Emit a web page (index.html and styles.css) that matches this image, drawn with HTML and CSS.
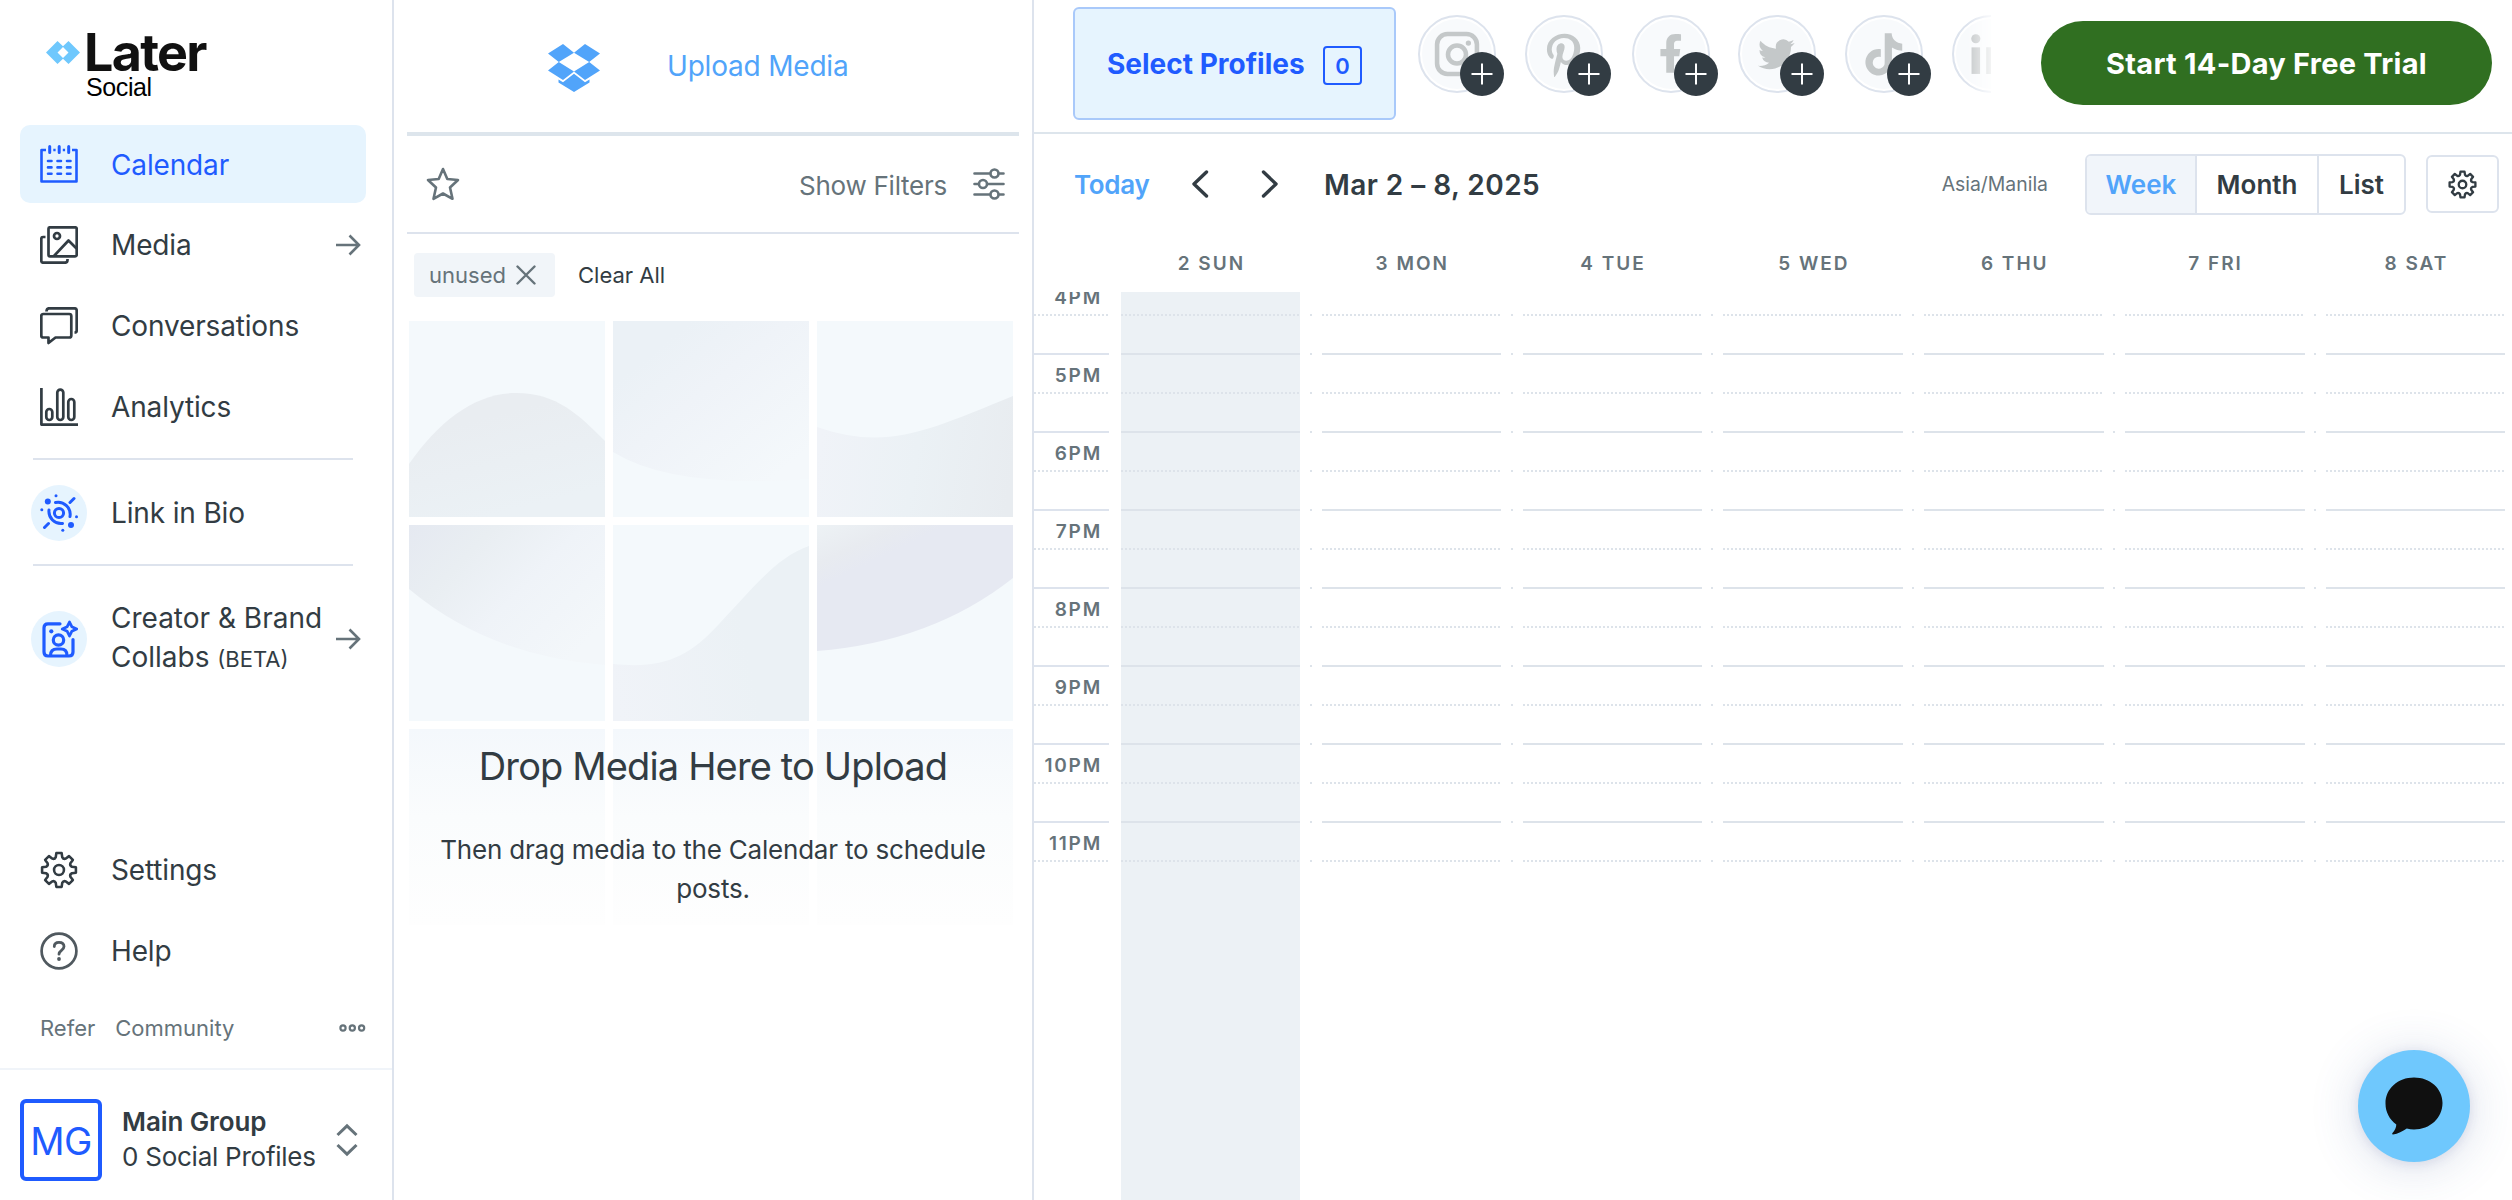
FILE: index.html
```html
<!DOCTYPE html>
<html lang="en">
<head>
    <meta charset="UTF-8">
    <meta name="viewport" content="width=device-width, initial-scale=1.0">
    <title>Later Social - Calendar</title>
    <link rel="stylesheet" href="styles.css">
</head>
<body>
    <!-- shared icons -->
    <svg class="defs" width="0" height="0">
        <symbol id="gear" viewBox="0 0 40 40">
            <path d="M17.2 2.2H22.8L23.4 6.4Q24.6 8.9 27.2 8L30.6 5.4L34.6 9.4L32 12.8Q31.1 15.4 33.6 16.6L37.8 17.2V22.8L33.6 23.4Q31.1 24.6 32 27.2L34.6 30.6L30.6 34.6L27.2 32Q24.6 31.1 23.4 33.6L22.8 37.8H17.2L16.6 33.6Q15.4 31.1 12.8 32L9.4 34.6L5.4 30.6L8 27.2Q8.9 24.6 6.4 23.4L2.2 22.8V17.2L6.4 16.6Q8.9 15.4 8 12.8L5.4 9.4L9.4 5.4L12.8 8Q15.4 8.9 16.6 6.4Z"/>
            <circle cx="20" cy="20" r="5.2"/>
        </symbol>
        <symbol id="arrow" viewBox="0 0 26 22">
            <path d="M1 11H24M14.5 1.5L24 11L14.5 20.5"/>
        </symbol>
        <symbol id="plus" viewBox="0 0 44 44">
            <path d="M22 11.5V32.5M11.5 22H32.5"/>
        </symbol>
    </svg>

    <nav class="sidebar">
        <div class="logo">
            <svg width="34" height="23" viewBox="0 0 34 23">
                <path fill="#6fc8fd" fill-rule="evenodd" d="M0 11.5L11.5 0L17 5.3L22.5 0L34 11.5L22.5 23L17 17.7L11.5 23ZM17 6L11.5 11.5L17 17L22.5 11.5Z"/>
            </svg>
            <div class="logo-text">
                <span class="logo-name">Later</span>
                <span class="logo-sub">Social</span>
            </div>
        </div>

        <div class="nav-item active">
            <svg class="icon" viewBox="0 0 38 38">
                <path stroke-width="2.6" d="M6 5H1.5V36.5H36.5V5H32"/>
                <path stroke-width="3" stroke-linecap="round" d="M9.7 1.5V7.5M19.2 1.5V7.5M28.7 1.5V7.5"/>
                <path stroke-width="2.6" d="M13.3 5H15.6M22.8 5H25.1"/>
                <path stroke-width="2.6" stroke-linecap="round" d="M8 16H11.5M17.5 16H21M27 16H30.5M8 22.4H11.5M17.5 22.4H21M27 22.4H30.5M8 28.8H11.5M17.5 28.8H21M27 28.8H30.5"/>
            </svg>
            <span>Calendar</span>
        </div>
        <div class="nav-item">
            <svg class="icon" viewBox="0 0 38 38">
                <rect x="8.5" y="1.3" width="28.2" height="29" rx="1.5"/>
                <circle cx="17" cy="10" r="3"/>
                <path d="M14 30L28.5 14.5L36.5 22.5M5.5 11H3Q1.3 11 1.3 12.7V34.7Q1.3 36.7 3.3 36.7H25Q27.5 36.7 27.5 34V33"/>
            </svg>
            <span>Media</span>
            <svg class="arrow"><use href="#arrow"/></svg>
        </div>
        <div class="nav-item">
            <svg class="icon" viewBox="0 0 38 38">
                <path d="M3.3 7H29.3Q31.3 7 31.3 9V28.5Q31.3 30.5 29.3 30.5H15.5L8.5 36V30.5H3.3Q1.3 30.5 1.3 28.5V9Q1.3 7 3.3 7Z"/>
                <path d="M6.5 4.5Q6.5 1.3 9 1.3H34.5Q36.7 1.3 36.7 3.5V23.5Q36.7 25.5 34.5 25.5"/>
            </svg>
            <span>Conversations</span>
        </div>
        <div class="nav-item">
            <svg class="icon" viewBox="0 0 38 38">
                <path d="M1.4 0V36.6H38"/>
                <rect x="6.3" y="21" width="6" height="11" rx="3"/>
                <rect x="17.3" y="1.6" width="6" height="30.4" rx="3"/>
                <rect x="28.3" y="11" width="6" height="21" rx="3"/>
            </svg>
            <span>Analytics</span>
        </div>

        <hr>

        <div class="nav-item bio">
            <span class="round">
                <svg width="38" height="38" viewBox="0 0 38 38" fill="none" stroke="#1f5bff" stroke-width="3">
                    <circle cx="19" cy="19" r="4.6"/>
                    <path stroke-linecap="round" d="M15.5 8.5A12.2 12.2 0 0 1 30 22.5M34 4.5L30 8.5M22.5 29.5A12.2 12.2 0 0 1 9 16M4.5 33.5L8.5 29.5"/>
                    <g fill="#1f5bff" stroke="none">
                        <circle cx="7.8" cy="7.5" r="3"/><circle cx="31" cy="31" r="3"/>
                        <circle cx="16" cy="1.8" r="1.5"/><circle cx="1.8" cy="15.8" r="1.5"/>
                        <circle cx="36.5" cy="22.8" r="1.5"/><circle cx="22.8" cy="36.3" r="1.5"/>
                    </g>
                </svg>
            </span>
            <span>Link in Bio</span>
        </div>

        <hr>

        <div class="nav-item collabs">
            <span class="round">
                <svg width="38" height="38" viewBox="0 0 38 38" fill="none" stroke="#1f5bff" stroke-width="3.2" stroke-linejoin="round" stroke-linecap="round">
                    <path d="M20 3.8H8Q4 3.8 4 7.8V32Q4 36 8 36H29Q33 36 33 32V19.5"/>
                    <circle cx="18.5" cy="20" r="5.2"/>
                    <path d="M10.5 35.5Q10.5 29 17 29H21Q27 29 27 35.5"/>
                    <path stroke-width="2.8" d="M29.5 2L31.8 6.7L36.7 9L31.8 11.3L29.5 16L27.2 11.3L22.3 9L27.2 6.7Z"/>
                    <circle cx="11.3" cy="11.3" r="2.1" fill="#1f5bff" stroke="none"/>
                </svg>
            </span>
            <span>Creator &amp; Brand<br>Collabs <small>(BETA)</small></span>
            <svg class="arrow"><use href="#arrow"/></svg>
        </div>

        <div class="nav-bottom">
            <div class="nav-item">
                <svg class="icon"><use href="#gear"/></svg>
                <span>Settings</span>
            </div>
            <div class="nav-item">
                <svg class="icon help" viewBox="0 0 38 38">
                    <circle cx="19" cy="19" r="17.4"/>
                    <path stroke-width="2.8" stroke-linecap="round" d="M14.3 14.5C14.3 11.7 16.2 10.4 19 10.4C22 10.4 24 12 24 14.6C24 18.4 19 18.4 19 22.2"/>
                    <circle cx="19" cy="27" r="1.9" fill="#50595f" stroke="none"/>
                </svg>
                <span>Help</span>
            </div>
            <div class="extra-links">
                <a>Refer</a>
                <a>Community</a>
                <svg width="27" height="8" viewBox="0 0 27 8" fill="none" stroke="#66737a" stroke-width="2.2">
                    <circle cx="4" cy="4" r="2.6"/><circle cx="13.3" cy="4" r="2.6"/><circle cx="22.6" cy="4" r="2.6"/>
                </svg>
            </div>
            <div class="group">
                <div class="avatar">MG</div>
                <div class="group-info">
                    <strong>Main Group</strong>
                    <span>0 Social Profiles</span>
                </div>
                <svg width="22" height="34" viewBox="0 0 22 34" fill="none" stroke="#66737a" stroke-width="3">
                    <path d="M1.5 12L11 2.8L20.5 12M1.5 22L11 31.2L20.5 22"/>
                </svg>
            </div>
        </div>
    </nav>

    <section class="media">
        <div class="upload">
            <svg width="52" height="48" viewBox="0 0 52 48" fill="#51a4fa">
                <path d="M15 0L26 8.8L10.8 18L0 9.6ZM37 0L52 9.6L41.2 18L26 8.8ZM10.8 18L26 27.6L15 36L0 26.4ZM41.2 18L52 26.4L37 36L26 27.6ZM26 29.8L37 38.2L41.5 35.5V38.6L26 48L10.5 38.6V35.5L15 38.2Z"/>
            </svg>
            <a>Upload Media</a>
        </div>
        <div class="filters">
            <svg width="34" height="34" viewBox="0 0 34 34" fill="none" stroke="#66737a" stroke-width="2.6" stroke-linejoin="round">
                <path d="M17 2L21.3 12L32 13L24 20.5L26.5 31.8L17 26.5L7.5 31.8L10 20.5L2 13L12.7 12Z"/>
            </svg>
            <span>Show Filters</span>
            <svg width="32" height="32" viewBox="0 0 32 32" fill="none" stroke="#66737a" stroke-width="2.6" stroke-linecap="round">
                <path d="M1.5 5.5H17M26 5.5H30.5M1.5 16H5.5M14.5 16H30.5M1.5 26.5H17M26 26.5H30.5"/>
                <circle cx="21.5" cy="5.5" r="4"/><circle cx="10" cy="16" r="4"/><circle cx="21.5" cy="26.5" r="4"/>
            </svg>
        </div>
        <div class="tags">
            <span class="tag">unused
                <svg width="20" height="20" viewBox="0 0 20 20" fill="none" stroke="#66737a" stroke-width="2.4" stroke-linecap="round"><path d="M1.5 1.5L18.5 18.5M18.5 1.5L1.5 18.5"/></svg>
            </span>
            <a>Clear All</a>
        </div>
        <div class="drop-zone">
            <svg class="tile" viewBox="0 0 196 196">
                <linearGradient id="g1" x1="0" y1="0" x2=".4" y2="1"><stop offset=".3" stop-color="#e9edf1"/><stop offset="1" stop-color="#ebf1f5"/></linearGradient>
                <path fill="url(#g1)" d="M0 143C30 100 66 72 107 72S170 94 196 120V196H0Z"/>
            </svg>
            <svg class="tile" viewBox="0 0 196 196">
                <linearGradient id="g2" x1="0" y1="0" x2="1" y2="1"><stop offset=".2" stop-color="#ebf1f6"/><stop offset=".45" stop-color="#eff3f8"/><stop offset=".9" stop-color="#f4f8fb"/></linearGradient>
                <path fill="url(#g2)" d="M0 0H196V158Q60 168 0 131Z"/>
            </svg>
            <svg class="tile" viewBox="0 0 196 196">
                <linearGradient id="g3" x1="0" y1=".5" x2="1" y2=".6"><stop offset="0" stop-color="#f0f3f8"/><stop offset=".5" stop-color="#ebf1f5"/><stop offset="1" stop-color="#e8ecf0"/></linearGradient>
                <path fill="url(#g3)" d="M0 106C70 130 110 110 196 75V196H0Z"/>
            </svg>
            <svg class="tile" viewBox="0 0 196 196">
                <linearGradient id="g4" x1="0" y1="0" x2="1" y2=".7"><stop offset="0" stop-color="#e5e9f1"/><stop offset=".3" stop-color="#e9eef2"/><stop offset=".6" stop-color="#eff3f8"/><stop offset="1" stop-color="#f3f7fa"/></linearGradient>
                <path fill="url(#g4)" d="M0 0H196V140Q80 131 0 64Z"/>
            </svg>
            <svg class="tile" viewBox="0 0 196 196">
                <linearGradient id="g5" x1="0" y1=".8" x2="1" y2=".6"><stop offset="0" stop-color="#f0f3f8"/><stop offset=".7" stop-color="#ebf1f5"/></linearGradient>
                <path fill="url(#g5)" d="M0 139C50 144 75 133 107 98C145 57 165 32 196 21V196H0Z"/>
            </svg>
            <svg class="tile" viewBox="0 0 196 196">
                <linearGradient id="g6" x1="0" y1="0" x2=".6" y2=".8"><stop offset="0" stop-color="#edf2f5"/><stop offset=".25" stop-color="#e8ebf0"/><stop offset=".4" stop-color="#e6e9f2"/></linearGradient>
                <path fill="url(#g6)" d="M0 0H196V53Q115 117 0 126Z"/>
            </svg>
            <div class="tile fade"></div>
            <div class="tile fade"></div>
            <div class="tile fade"></div>
            <div class="drop-text">
                <h2>Drop Media Here to Upload</h2>
                <p>Then drag media to the Calendar to schedule posts.</p>
            </div>
        </div>
    </section>

    <main>
        <header>
            <button class="select-profiles"><span>Select Profiles</span><b>0</b></button>
            <div class="profiles">
                <div class="profile">
                    <svg class="network" viewBox="0 0 78 78" fill="none" stroke="#c4c8c9">
                        <rect x="18" y="18" width="42" height="42" rx="11" stroke-width="4.8"/>
                        <circle cx="39" cy="39.5" r="9.5" stroke-width="4.8"/>
                        <circle cx="51" cy="27.5" r="2.8" fill="#c4c8c9" stroke="none"/>
                    </svg>
                    <svg class="add"><use href="#plus"/></svg>
                </div>
                <div class="profile">
                    <svg class="network" viewBox="0 0 78 78" fill="#c4c8c9"><path transform="translate(21 17) scale(.0915)" d="M204 6.5C101.4 6.5 0 74.9 0 185.6 0 256 39.6 296 63.6 296c9.9 0 15.6-27.6 15.6-35.4 0-9.3-23.7-29.1-23.7-67.8 0-80.4 61.2-137.4 140.4-137.4 68.1 0 118.5 38.7 118.5 109.8 0 53.1-21.3 152.7-90.3 152.7-24.9 0-46.2-18-46.2-43.8 0-37.8 26.4-74.4 26.4-113.4 0-66.2-93.9-54.2-93.9 25.8 0 16.8 2.1 35.4 9.6 50.7-13.8 59.4-42 147.9-42 209.1 0 18.9 2.7 37.5 4.5 56.4 3.4 3.8 1.7 3.4 6.9 1.5 50.4-69 48.6-82.5 71.4-172.8 12.3 23.4 44.1 36 69.3 36 106.2 0 153.9-103.5 153.9-196.8C384 71.3 298.2 6.5 204 6.5z"/></svg>
                    <svg class="add"><use href="#plus"/></svg>
                </div>
                <div class="profile">
                    <svg class="network" viewBox="0 0 78 78" fill="#c4c8c9"><path transform="translate(13.5 13.7) scale(2.05)" d="M14 13.5h2.7l.5-3.7H14V7.5c0-1.3.4-2 2-2h1.6V2.2C17.2 2.1 16 2 14.7 2 11.9 2 10 3.7 10 6.7v3.1H7v3.7h3V22h4z"/></svg>
                    <svg class="add"><use href="#plus"/></svg>
                </div>
                <div class="profile">
                    <svg class="network" viewBox="0 0 78 78" fill="#c4c8c9"><path transform="translate(19 20) scale(1.61)" d="M23.953 4.57a10 10 0 01-2.825.775 4.958 4.958 0 002.163-2.723c-.951.555-2.005.959-3.127 1.184a4.92 4.92 0 00-8.384 4.482C7.69 8.095 4.067 6.13 1.64 3.162a4.822 4.822 0 00-.666 2.475c0 1.71.87 3.213 2.188 4.096a4.904 4.904 0 01-2.228-.616v.06a4.923 4.923 0 003.946 4.827 4.996 4.996 0 01-2.212.085 4.936 4.936 0 004.604 3.417 9.867 9.867 0 01-6.102 2.105c-.39 0-.779-.023-1.17-.067a13.995 13.995 0 007.557 2.209c9.053 0 13.998-7.496 13.998-13.985 0-.21 0-.42-.015-.63A9.935 9.935 0 0024 4.59z"/></svg>
                    <svg class="add"><use href="#plus"/></svg>
                </div>
                <div class="profile">
                    <svg class="network" viewBox="0 0 78 78" fill="#c4c8c9"><path transform="translate(16.5 17) scale(1.86)" d="M12.525.02c1.31-.02 2.61-.01 3.91-.02.08 1.53.63 3.09 1.75 4.17 1.12 1.11 2.7 1.62 4.24 1.79v4.03c-1.44-.05-2.89-.35-4.2-.97-.57-.26-1.1-.59-1.62-.93-.01 2.92.01 5.84-.02 8.75-.08 1.4-.54 2.79-1.35 3.94-1.31 1.92-3.58 3.17-5.91 3.21-1.43.08-2.86-.31-4.08-1.03-2.02-1.19-3.44-3.37-3.65-5.71-.02-.5-.03-1-.01-1.49.18-1.9 1.12-3.72 2.58-4.96 1.66-1.44 3.98-2.13 6.15-1.72.02 1.48-.04 2.96-.04 4.44-.99-.32-2.15-.23-3.02.37-.63.41-1.11 1.04-1.36 1.75-.21.51-.15 1.07-.14 1.61.24 1.64 1.82 3.02 3.5 2.87 1.12-.01 2.19-.66 2.77-1.61.19-.33.4-.67.41-1.06.1-1.79.06-3.57.07-5.36.01-4.03-.01-8.05.02-12.07z"/></svg>
                    <svg class="add"><use href="#plus"/></svg>
                </div>
                <div class="profile">
                    <svg class="network" viewBox="0 0 78 78" fill="#c4c8c9">
                        <circle cx="23" cy="23" r="4.8"/>
                        <rect x="18.5" y="32" width="9" height="28"/>
                        <path d="M34 32H42V36Q45 31 50 31Q60 31 60 43V60H51V45Q51 39 47 39Q43 39 43 45V60H34Z"/>
                    </svg>
                </div>
            </div>
            <button class="trial"><span>Start 14-Day Free Trial</span></button>
        </header>

        <div class="toolbar">
            <a class="today">Today</a>
            <svg class="prev" width="18" height="28" viewBox="0 0 18 28"><path d="M15.5 2L3 14L15.5 26"/></svg>
            <svg class="next" width="18" height="28" viewBox="0 0 18 28"><path d="M2.5 2L15 14L2.5 26"/></svg>
            <h1>Mar 2 – 8, 2025</h1>
            <span class="timezone">Asia/Manila</span>
            <div class="views">
                <button class="selected">Week</button>
                <button>Month</button>
                <button>List</button>
            </div>
            <button class="options"><svg><use href="#gear"/></svg></button>
        </div>

        <div class="days">
            <span>2 SUN</span>
            <span>3 MON</span>
            <span>4 TUE</span>
            <span>5 WED</span>
            <span>6 THU</span>
            <span>7 FRI</span>
            <span>8 SAT</span>
        </div>
        <div class="week">
            <div class="hours" id="hours"></div>
        </div>
    </main>

    <button class="chat">
        <svg width="60" height="60" viewBox="0 0 60 60" fill="#101010">
            <path d="M30 1.5C46 1.5 58.5 12.5 58.5 27C58.5 42 46 53.5 30 53.5C27.5 53.5 25 53.2 22.8 52.6C18.5 55.5 14 58 9 58.5C8 58.6 8 57.5 8.7 56.8C10.7 54.5 12.3 51.5 12.3 48.5C5.5 43.5 1.5 36 1.5 27.5C1.5 12.5 14 1.5 30 1.5Z"/>
        </svg>
    </button>

    <script>
        // Build hour rows, each one split in two half hour lines
        const hours = document.getElementById('hours');
        for (let h = 4; h <= 11; h++) {
            ['solid', 'dotted'].forEach(type => {
                const row = document.createElement('div');
                row.className = 'row ' + type;
                let html = '<div class="time">' + (type === 'solid' ? h + 'PM' : '') + '</div>';
                for (let d = 0; d < 7; d++) {
                    html += '<div class="slot"><i></i><b></b></div>';
                }
                row.innerHTML = html;
                hours.appendChild(row);
            });
        }
    </script>
</body>
</html>
```
FILE: styles.css
```css
:root {
    --blue: #1f5bff;
    --sky: #51a4fa;
    --text: #323c43;
    --muted: #66737a;
    --line: #dde3ed;
    --pale: #e6f4fe;
}

* {
    box-sizing: border-box;
    margin: 0;
    padding: 0;
}

body {
    font-family: Inter, "Liberation Sans", sans-serif;
    color: var(--text);
    background: #fff;
    width: 2512px;
    height: 1200px;
    display: flex;
    overflow: hidden;
}

button {
    font-family: inherit;
    color: inherit;
    background: none;
    border: none;
}

.defs {
    position: absolute;
}

/* Sidebar */
.sidebar {
    width: 394px;
    flex: none;
    border-right: 2px solid var(--line);
    display: flex;
    flex-direction: column;
}

.logo {
    height: 125px;
    padding: 24px 0 0 46px;
    display: flex;
    gap: 4px;
}

.logo svg {
    margin-top: 17px;
}

.logo-text {
    display: flex;
    flex-direction: column;
    color: #111;
}

.logo-name {
    font-size: 52px;
    line-height: 52px;
    padding-top: 3px;
    font-weight: 700;
    letter-spacing: -1.7px;
}

.logo-sub {
    font-family: "Liberation Sans", sans-serif;
    font-size: 25px;
    line-height: 22px;
    color: #000;
    margin: -3px 0 0 2px;
    letter-spacing: -0.4px;
}

.nav-item {
    height: 78px;
    margin: 0 26px 3px 20px;
    padding: 0 6px 0 20px;
    border-radius: 10px;
    display: flex;
    align-items: center;
    gap: 33px;
    font-size: 28px;
    letter-spacing: -0.15px;
    white-space: nowrap;
    flex: none;
}

.nav-item.active {
    background: var(--pale);
    color: var(--blue);
}

.nav-item.active span {
    padding-top: 1px;
}

.icon {
    width: 38px;
    height: 38px;
    flex: none;
    fill: none;
    stroke: currentColor;
    stroke-width: 2.7;
    stroke-linejoin: round;
}

.help {
    color: #50595f;
}

.arrow {
    width: 26px;
    height: 22px;
    margin-left: auto;
    flex: none;
    fill: none;
    stroke: var(--muted);
    stroke-width: 2.6;
}

.nav-item > .arrow {
    position: relative;
    left: 1px;
}

.sidebar hr {
    border: none;
    height: 2px;
    margin: 0 39px 0 33px;
    background: var(--line);
    flex: none;
}

.nav-item + hr {
    margin-top: 9px;
}

.round {
    width: 56px;
    height: 56px;
    margin: 0 -9px;
    border-radius: 50%;
    background: var(--pale);
    display: flex;
    align-items: center;
    justify-content: center;
    flex: none;
}

.bio {
    margin-top: 14px;
    margin-bottom: 3px;
}

.collabs {
    margin-top: 34px;
    line-height: 39px;
    letter-spacing: 0;
}

.collabs .arrow {
    margin-left: -21px;
}

.collabs small {
    font-size: 22px;
}

.nav-bottom {
    margin-top: auto;
}

.extra-links {
    height: 75px;
    padding: 0 26px 5px 40px;
    display: flex;
    align-items: center;
    gap: 20px;
    font-size: 22px;
    color: var(--muted);
}

.extra-links svg {
    margin-left: auto;
}

.group {
    height: 132px;
    border-top: 2px solid #f0f4f9;
    padding: 29px 34px 0 20px;
    display: flex;
    gap: 20px;
}

.avatar {
    width: 82px;
    height: 82px;
    border: 4px solid var(--blue);
    border-radius: 6px;
    color: var(--blue);
    font-size: 38px;
    line-height: 77px;
    text-align: center;
    letter-spacing: -0.5px;
    flex: none;
}

.group-info {
    width: 196px;
    display: flex;
    flex-direction: column;
    font-size: 26px;
    line-height: 35px;
    padding-top: 5px;
    white-space: nowrap;
    letter-spacing: -0.25px;
}

.group-info strong {
    font-weight: 600;
    letter-spacing: -0.1px;
}

.group svg {
    margin-top: 24px;
    flex: none;
}

/* Media panel */
.media {
    width: 640px;
    flex: none;
    border-right: 2px solid var(--line);
    padding: 0 13px;
}

.upload {
    height: 136px;
    border-bottom: 4px solid #dde5ec;
    display: flex;
    align-items: center;
    padding: 4px 0 0 141px;
    gap: 67px;
    font-size: 28px;
    letter-spacing: -0.2px;
    color: var(--sky);
}

.upload a {
    margin-top: -5px;
    white-space: nowrap;
}

.filters {
    height: 98px;
    border-bottom: 2px solid var(--line);
    display: flex;
    align-items: center;
    padding: 0 14px 0 19px;
    font-size: 26px;
    letter-spacing: -0.25px;
    color: var(--muted);
}

.filters span {
    margin: 2px 26px 0 auto;
}

.tags {
    height: 87px;
    padding: 19px 0 0 7px;
    display: flex;
    gap: 23px;
    font-size: 22px;
    line-height: 44px;
}

.tag {
    height: 44px;
    width: 141px;
    padding-left: 15px;
    border-radius: 4px;
    background: #f1f5f9;
    color: var(--muted);
    display: flex;
    align-items: center;
    gap: 10px;
}

.drop-zone {
    display: grid;
    grid-template-columns: repeat(3, 196px);
    gap: 8px;
    padding-left: 2px;
    position: relative;
}

.tile {
    width: 196px;
    height: 196px;
    background: #f4f9fc;
}

.tile.fade {
    background: linear-gradient(#f4f8fc, #fafcfd 45%, #fefefe);
}

/* sits over the fading tiles */
.drop-text {
    position: absolute;
    left: 0;
    right: 0;
    top: 417px;
    text-align: center;
}

.drop-text h2 {
    font-size: 38px;
    line-height: 56px;
    font-weight: 400;
    letter-spacing: -0.85px;
    white-space: nowrap;
}

.drop-text p {
    font-size: 26px;
    line-height: 39px;
    letter-spacing: -0.2px;
    margin: 36px 20px 0;
}

/* Calendar */
main {
    flex: 1;
    min-width: 0;
    display: flex;
    flex-direction: column;
}

header {
    height: 134px;
    border-bottom: 2px solid #dde5ec;
    padding: 7px 20px 0 39px;
    display: flex;
    align-items: flex-start;
    flex: none;
}

.select-profiles {
    width: 323px;
    height: 113px;
    border: 2px solid #a9c9fa;
    border-radius: 6px;
    background: var(--pale);
    color: var(--blue);
    font-size: 28px;
    font-weight: 700;
    display: flex;
    align-items: center;
    justify-content: space-between;
    padding: 0 32px;
    white-space: nowrap;
}

.select-profiles b {
    width: 39px;
    height: 39px;
    border: 2px solid var(--blue);
    border-radius: 4px;
    font-size: 22px;
    line-height: 36px;
    font-weight: 600;
    margin-top: 4px;
}

.profiles {
    display: flex;
    gap: 28.8px;
    width: 579px;
    margin-left: 16px;
    padding: 8px 0 0 6px;
    overflow: hidden;
    -webkit-mask-image: linear-gradient(to right, #000 555px, transparent 585px);
    mask-image: linear-gradient(to right, #000 555px, transparent 585px);
}

.profile {
    width: 78px;
    height: 81px;
    flex: none;
    position: relative;
}

.network {
    width: 78px;
    height: 78px;
    border: 2px solid var(--line);
    border-radius: 50%;
    background: #f8fafc;
    box-shadow: inset 0 0 0 2px #fff;
}

.add {
    position: absolute;
    left: 42px;
    top: 37px;
    width: 44px;
    height: 44px;
    border-radius: 50%;
    background: var(--text);
    stroke: #fff;
    stroke-width: 2;
}

.trial {
    width: 451px;
    height: 84px;
    margin: 14px 0 0 auto;
    border-radius: 42px;
    background: #306f21;
    color: #fff;
    font-size: 29px;
    font-weight: 700;
    letter-spacing: 0.25px;
    white-space: nowrap;
}

.toolbar {
    height: 100px;
    flex: none;
    display: flex;
    align-items: center;
    padding: 0 13px 0 40px;
}

.toolbar > svg {
    fill: none;
    stroke: var(--text);
    stroke-width: 3.4;
    stroke-linecap: round;
    stroke-linejoin: round;
}

.today {
    width: 117px;
    padding-top: 1px;
    color: var(--sky);
    font-size: 26px;
    font-weight: 600;
    letter-spacing: -0.3px;
    white-space: nowrap;
}

.next {
    margin: 0 45px 0 52px;
}

.toolbar h1 {
    padding-top: 1px;
    font-size: 28px;
    font-weight: 600;
    letter-spacing: 0.45px;
    white-space: nowrap;
}

.timezone {
    font-size: 19.4px;
    color: var(--muted);
    margin-left: auto;
}

.views {
    height: 61px;
    margin: 1px 20px 0 37px;
    border: 2px solid var(--line);
    border-radius: 6px;
    display: flex;
    overflow: hidden;
}

.views button {
    width: 122px;
    border-right: 2px solid var(--line);
    font-size: 26px;
    font-weight: 600;
}

.views .selected {
    width: 110px;
    background: #f1f5fa;
    color: var(--sky);
}

.views button:last-child {
    width: 85px;
    border: none;
}

.options {
    width: 73px;
    height: 58px;
    border: 2px solid var(--line);
    border-radius: 6px;
}

.options svg {
    width: 29px;
    height: 29px;
    display: block;
    margin: auto;
    fill: none;
    stroke: var(--text);
    stroke-width: 3.2;
    stroke-linejoin: round;
}

.days {
    height: 58px;
    flex: none;
    padding-left: 77px;
    display: flex;
    overflow: hidden;
}

.days span {
    width: 200.83px;
    flex: none;
    text-align: center;
    font-size: 19px;
    line-height: 60px;
    font-weight: 600;
    letter-spacing: 2px;
    color: var(--muted);
}

.week {
    flex: 1;
    overflow: hidden;
    background: linear-gradient(#ecf1f5, #ecf1f5) no-repeat 87px 0 / 179px 100%;
}

/* scrolled a little so the first label is cut */
.hours {
    margin-top: -17px;
}

.row {
    height: 39px;
    display: grid;
    grid-template-columns: 77px repeat(7, 200.83px);
}

.time {
    width: 75px;
    border-top: 2px solid var(--line);
    padding-right: 7px;
    text-align: right;
    font-size: 19px;
    line-height: 42px;
    font-weight: 600;
    letter-spacing: 1.8px;
    color: var(--muted);
}

.slot {
    display: flex;
    padding-left: 10px;
    gap: 9.4px;
}

.slot i {
    flex: 1;
    height: 2px;
    background: #dde3ea;
}

.slot b {
    width: 2px;
    height: 2px;
    background: #dde3ea;
}

.dotted .slot i,
.dotted .time {
    height: 2px;
    border: none;
    background: repeating-linear-gradient(to right, #dde3ea 0 2px, transparent 2px 4px);
}

/* Chat bubble floats over the calendar */
.chat {
    position: absolute;
    right: 42px;
    bottom: 38px;
    width: 112px;
    height: 112px;
    border-radius: 50%;
    background: #6fc8fd;
    box-shadow: 0 4px 50px rgba(60, 90, 150, 0.2), 0 2px 12px rgba(60, 60, 130, 0.12);
    display: flex;
    align-items: center;
    justify-content: center;
}
```
